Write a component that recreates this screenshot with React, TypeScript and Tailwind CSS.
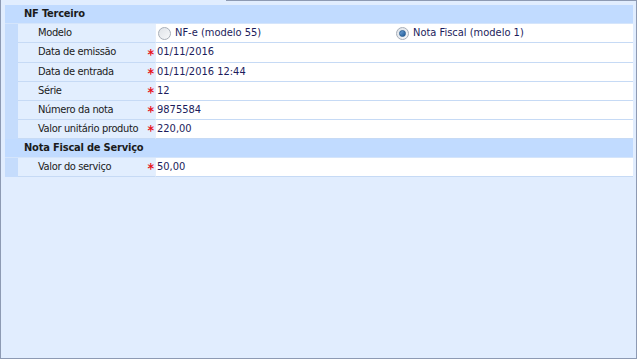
import React, { useState } from 'react';

type Field = { label: string; value: string; required?: boolean; tall?: boolean };

const terceiroFields: Field[] = [
  { label: 'Data de emissão', value: '01/11/2016', required: true, tall: true },
  { label: 'Data de entrada', value: '01/11/2016 12:44', required: true },
  { label: 'Série', value: '12', required: true },
  { label: 'Número da nota', value: '9875584', required: true },
  { label: 'Valor unitário produto', value: '220,00', required: true },
];

const servicoFields: Field[] = [{ label: 'Valor do serviço', value: '50,00', required: true }];

const Radio = ({ checked }: { checked: boolean }) => (
  <span className="w-[13px] h-[13px] rounded-full border border-[#a7aeb8] bg-gradient-to-br from-[#dfe3e8] to-[#f7f8fa] flex items-center justify-center shrink-0">
    {checked && (
      <span className="w-[7px] h-[7px] rounded-full bg-gradient-to-br from-[#6fa3d8] to-[#1c5a96] border border-[#2a5f94]" />
    )}
  </span>
);

const SectionHeader = ({ title }: { title: string }) => (
  <div className="h-[19px] bg-[#c1dbff] flex items-center pl-[19px] font-bold text-[#1b1b1b] tracking-[-0.2px] border-b border-[#d5e5fb]">
    {title}
  </div>
);

const Row = ({ label, required, tall, children }: { label: string; required?: boolean; tall?: boolean; children: React.ReactNode }) => (
  <div className={`flex ${tall ? 'h-[20px]' : 'h-[19px]'}`}>
    <div className="w-[13px] bg-[#c5dcfc] shrink-0" />
    <div className="w-[137px] shrink-0 bg-[#e2eefe] border-b border-[#c6daf5] flex items-center pl-[20px] pr-[1px] text-[#1b1b1b]">
      <span className="flex-1 tracking-[-0.35px]">{label}</span>
      {required && <span className="text-[#e8141b] font-bold text-[14px] leading-none mt-[2px]">*</span>}
    </div>
    <div className="flex-1 bg-white border-b border-[#c6daf5] border-l border-l-[#e6effc] flex items-center pl-[1px] text-[#1c1c5c]">
      {children}
    </div>
  </div>
);

export default function App() {
  const [modelo, setModelo] = useState<'55' | '1'>('1');

  return (
    <div className="w-[637px] h-[359px] bg-[#e1edfe] text-[11px] font-['DejaVu_Sans_Condensed','DejaVu_Sans',sans-serif] font-stretch-condensed flex flex-col overflow-hidden">
      <div className="flex h-[2px] shrink-0">
        <div className="w-[226px] border-l border-[#8d9ab3]" />
        <div className="flex-1 border-t border-r border-[#8d9ab3]" />
      </div>
      <div className="flex-1 border-l border-r border-b border-[#8d9ab3] pt-[3px] pl-[4px] pr-[3px] flex flex-col">
        <SectionHeader title="NF Terceiro" />
        <Row label="Modelo">
          <div className="grid grid-cols-2 w-full">
            <button onClick={() => setModelo('55')} className="flex items-center gap-[4px] pl-[1px]">
              <Radio checked={modelo === '55'} />
              <span>NF-e (modelo 55)</span>
            </button>
            <button onClick={() => setModelo('1')} className="flex items-center gap-[4px] pl-[1px]">
              <Radio checked={modelo === '1'} />
              <span>Nota Fiscal (modelo 1)</span>
            </button>
          </div>
        </Row>
        {terceiroFields.map(f => (
          <Row key={f.label} label={f.label} required={f.required} tall={f.tall}>
            {f.value}
          </Row>
        ))}
        <SectionHeader title="Nota Fiscal de Serviço" />
        {servicoFields.map(f => (
          <Row key={f.label} label={f.label} required={f.required}>
            {f.value}
          </Row>
        ))}
      </div>
    </div>
  );
}
